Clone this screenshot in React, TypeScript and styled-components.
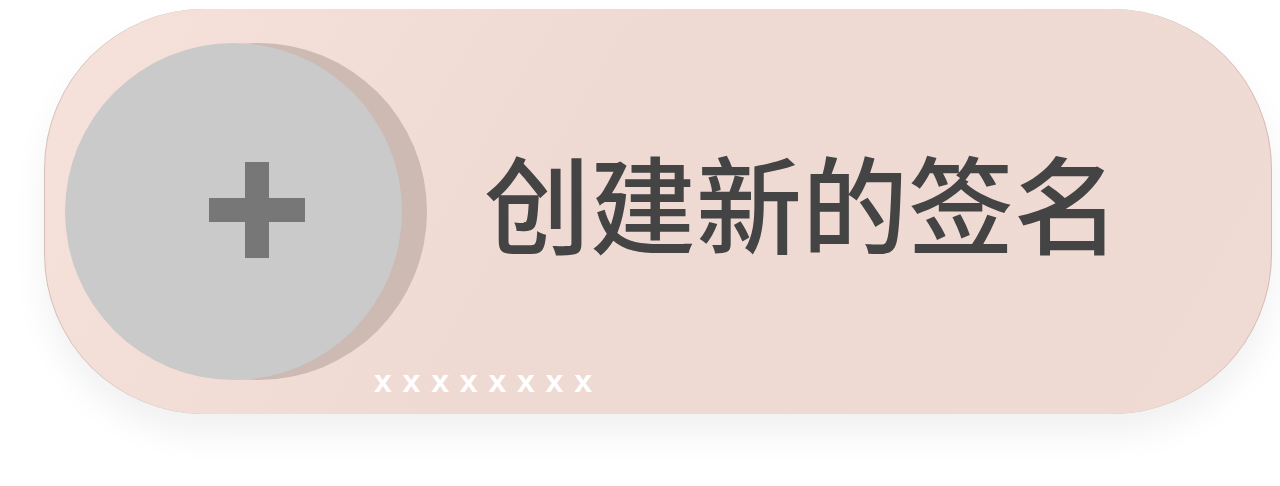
import styled, { createGlobalStyle } from "styled-components";

const GlobalStyle = createGlobalStyle`
    html, body {
        margin: 0;
        padding: 0;
        background: #ffffff;
    }
    body {
        width: 1280px;
        height: 486px;
        overflow: hidden;
        font-family: "Noto Sans CJK SC", "Noto Sans", sans-serif;
    }
`;

const Page = styled.div`
    padding: 9px 8px 0 44px;
`;

const Pill = styled.div`
    position: relative;
    box-sizing: border-box;
    width: 1228px;
    height: 405px;
    border-radius: 160px;
    background: linear-gradient(120deg, #f6e1db 0%, #efdad3 45%, #f0dbd4 100%);
    box-shadow:
        inset 1px 0 0 rgba(120, 100, 95, 0.25),
        inset -1px 0 0 rgba(120, 100, 95, 0.25),
        0 20px 34px rgba(0, 0, 0, 0.06);
    display: flex;
    align-items: center;
    padding-left: 21px;
`;

const Circle = styled.div`
    flex: none;
    width: 337px;
    height: 337px;
    border-radius: 50%;
    background: #cacaca;
    box-shadow: 25px 0 0 #ccbab3;
    display: flex;
    align-items: center;
    justify-content: center;
    padding-left: 46px;
    box-sizing: border-box;
    padding-bottom: 4px;
`;

const Title = styled.div`
    margin-left: 82px;
    font-size: 106px;
    line-height: 1;
    color: #444444;
    font-weight: 500;
    margin-top: -24px;
    white-space: nowrap;
`;

const Hint = styled.div`
    position: absolute;
    left: 330px;
    top: 356px;
    font-family: "Liberation Sans", Arial, sans-serif;
    font-weight: 700;
    font-size: 32px;
    line-height: 1;
    letter-spacing: 10.8px;
    color: #ffffff;
`;

function PlusIcon() {
	return (
		<svg width="96" height="96" viewBox="0 0 96 96">
			<rect x="36" y="0" width="24" height="96" fill="#777777" />
			<rect x="0" y="36" width="96" height="24" fill="#777777" />
		</svg>
	);
}

export default function App() {
	return (
		<>
			<GlobalStyle />
			<Page>
				<Pill>
					<Circle>
						<PlusIcon />
					</Circle>
					<Title>创建新的签名</Title>
					<Hint>xxxxxxxx</Hint>
				</Pill>
			</Page>
		</>
	);
}
